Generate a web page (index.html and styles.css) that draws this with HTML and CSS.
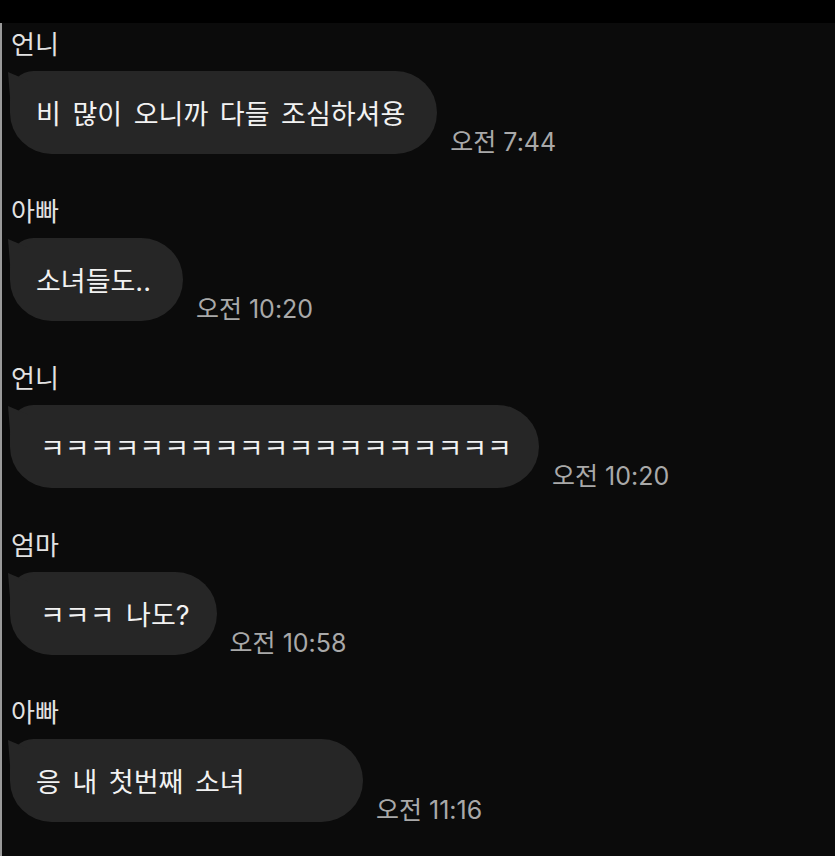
FILE: index.html
```html
<!DOCTYPE html>
<html lang="ko">
<head>
    <meta charset="UTF-8" />
    <meta name="viewport" content="width=device-width, initial-scale=1.0"/>
    <title>가족 채팅</title>
    <link rel="stylesheet" href="styles.css">
</head>
<body>
    <div class="top-band"></div>

    <main class="chat">
        <div class="msg-group">
            <div class="sender">언니</div>
            <div class="msg-row">
                <div class="bubble">비 많이 오니까 다들 조심하셔용</div>
                <span class="time">오전 7:44</span>
            </div>
        </div>

        <div class="msg-group">
            <div class="sender">아빠</div>
            <div class="msg-row">
                <div class="bubble">소녀들도..</div>
                <span class="time">오전 10:20</span>
            </div>
        </div>

        <div class="msg-group">
            <div class="sender">언니</div>
            <div class="msg-row">
                <div class="bubble bubble-kk">ㅋㅋㅋㅋㅋㅋㅋㅋㅋㅋㅋㅋㅋㅋㅋㅋㅋㅋㅋ</div>
                <span class="time">오전 10:20</span>
            </div>
        </div>

        <div class="msg-group">
            <div class="sender">엄마</div>
            <div class="msg-row">
                <div class="bubble bubble-kk">ㅋㅋㅋ 나도?</div>
                <span class="time">오전 10:58</span>
            </div>
        </div>

        <div class="msg-group">
            <div class="sender">아빠</div>
            <div class="msg-row">
                <div class="bubble bubble-wide">응 내 첫번째 소녀</div>
                <span class="time">오전 11:16</span>
            </div>
        </div>
    </main>
</body>
</html>
```

FILE: styles.css
```css
:root {
    --bg-color: #0b0b0b;
    --bubble-color: #262626;
    --name-color: #e2e2e2;
    --text-color: #f2f2f2;
    --time-color: #a9a9a9;
}
html, body {
    height: 100%;
}
body {
    margin: 0;
    background-color: var(--bg-color);
    font-family: 'Inter', 'Noto Sans CJK KR', sans-serif;
    display: flex;
    flex-direction: column;
    overflow: hidden;
}
.top-band {
    height: 23px;
    background-color: #000;
    flex-shrink: 0;
}
.chat {
    flex: 1;
    border-left: 2px solid #9a9a9a;
    padding: 5px 0 0 8px;
}
.msg-group {
    margin-bottom: 41px;
}
.sender {
    color: var(--name-color);
    font-family: 'Noto Sans CJK KR', sans-serif;
    font-size: 26px;
    line-height: 30px;
    margin-bottom: 13px;
    padding-left: 1px;
}
.msg-row {
    display: flex;
    align-items: flex-end;
    gap: 13px;
}
.bubble {
    position: relative;
    box-sizing: border-box;
    height: 83px;
    display: flex;
    align-items: center;
    padding: 0 32px 0 26px;
    background-color: var(--bubble-color);
    border-radius: 24px 42px 42px 42px;
    color: var(--text-color);
    font-size: 27px;
    word-spacing: 4px;
    white-space: nowrap;
}
.bubble::before {
    content: "";
    position: absolute;
    left: -2px;
    top: 1px;
    width: 20px;
    height: 30px;
    background-color: var(--bubble-color);
    clip-path: polygon(0 0, 100% 28%, 100% 100%, 12% 100%);
}
.bubble-kk {
    padding: 0 27px 0 30px;
}
.bubble-wide {
    min-width: 353px;
}
.time {
    color: var(--time-color);
    font-size: 25px;
    line-height: 24px;
    white-space: nowrap;
}
```
